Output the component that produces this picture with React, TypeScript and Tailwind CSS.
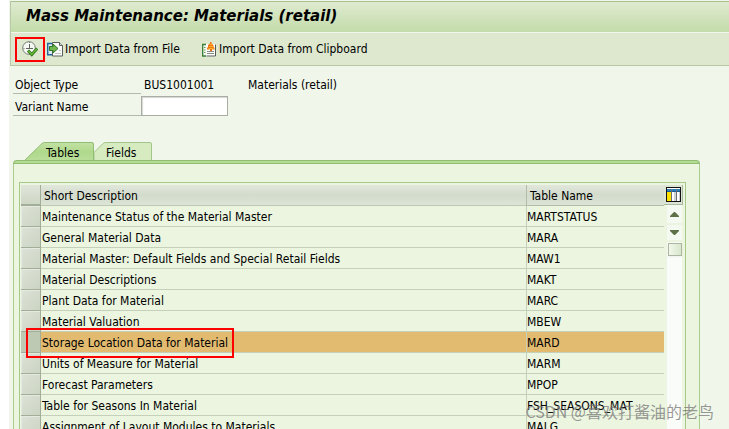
import { useState } from "react";

const rows = [
  { description: "Maintenance Status of the Material Master", table: "MARTSTATUS" },
  { description: "General Material Data", table: "MARA" },
  { description: "Material Master: Default Fields and Special Retail Fields", table: "MAW1" },
  { description: "Material Descriptions", table: "MAKT" },
  { description: "Plant Data for Material", table: "MARC" },
  { description: "Material Valuation", table: "MBEW" },
  { description: "Storage Location Data for Material", table: "MARD" },
  { description: "Units of Measure for Material", table: "MARM" },
  { description: "Forecast Parameters", table: "MPOP" },
  { description: "Table for Seasons In Material", table: "FSH_SEASONS_MAT" },
  { description: "Assignment of Layout Modules to Materials", table: "MALG" },
];

function ExecuteIcon() {
  return (
    <svg width="16" height="16" viewBox="0 0 16 16" fill="none" aria-hidden="true">
      <circle cx="7" cy="7" r="6.300" fill="#f6f8f3" stroke="#777c75" />
      <path d="M7.500 3v5M4 7.500h7" stroke="#5f655d" />
      <path d="M7.500 1v1M1.500 7.500h1M7.500 12v1" stroke="#777c75" />
      <path d="M6 9.500l3.800 4L15.200 7.500" stroke="#2f761b" strokeWidth="3" />
      <path d="M6.500 10l3.300 3.300L14.700 8" stroke="#6fc042" strokeWidth="1.200" />
    </svg>
  );
}

function FileImportIcon() {
  return (
    <svg width="16" height="15" viewBox="0 0 16 15" fill="none" aria-hidden="true">
      <path d="M5 1.500H.7v11.300H5" fill="#dce9f0" stroke="#25679a" strokeWidth="1.400" />
      <path d="M5.500.5h7l3 3v10.500h-10z" fill="#fbfcfa" stroke="#5a605b" />
      <path d="M12.500.5v3h3" fill="#d8dfd8" stroke="#5a605b" />
      <path d="M12 8.500h2M8 11.500h6" stroke="#c0c6c0" />
      <path d="M2.500 4.500H6V2l5 4.500L6 11V8.500H2.500z" fill="#73b84f" stroke="#2d7529" />
    </svg>
  );
}

function ClipboardImportIcon() {
  return (
    <svg width="14" height="15" viewBox="0 0 14 15" fill="none" aria-hidden="true">
      <path d="M4 2.500H.7v11.500H4" fill="#f4faf0" stroke="#387c35" strokeWidth="1.300" />
      <path d="M2 5.500h1.500M2 8h1.500M2 10.500h1.500" stroke="#6aa05a" />
      <path d="M4 2h10v12.500H4z" fill="#fff" />
      <path d="M13.500 2.500V14H4.500" stroke="#555b55" />
      <path d="M5 9.500h7M5 11.500h7" stroke="#858b85" />
      <path d="M8 0h1.500v1.500l2 1.500v2l1 1v1.500H10V9H8V7.500H5V6l1-1V3l2-1.500z" fill="#ee7411" />
      <path d="M8 2.500h2M7 4.500h4M6.500 6.500h5" stroke="#ffb52b" />
    </svg>
  );
}

function ColumnsIcon() {
  return (
    <svg width="15" height="15" viewBox="0 0 15 15" aria-hidden="true">
      <path d="M0 0h15v15H0z" fill="#111" />
      <path d="M1 1h13v13H1z" fill="#fff" />
      <path d="M1 2h13v3H1z" fill="#2c80ba" />
      <path d="M1 4h13v1H1z" fill="#1b5b8d" />
      <path d="M1 5h4v9H1z" fill="#ffe100" />
      <path d="M5 2h1v12H5zM10 2h1v12h-1z" fill="#68717a" />
      <path d="M8 5h2v9H8zM13 5h1v9h-1z" fill="#ccd2d6" />
    </svg>
  );
}

function Tabs({ active, onChange }: { active: string; onChange: (tab: string) => void }) {
  return (
    <div role="tablist" className="flex items-end pl-3">
      <button
        role="tab"
        aria-selected={active === "Tables"}
        onClick={() => onChange("Tables")}
        className="relative h-[18px] w-[69px] pt-[3px] pl-[21px] text-left"
      >
        <svg className="absolute inset-0" width="69" height="18" viewBox="0 0 69 18" aria-hidden="true">
          <defs>
            <linearGradient id="active-tab" x1="0" y1="0" x2="0" y2="1">
              <stop offset="0" stopColor="#c4e2a5" />
              <stop offset="0.5" stopColor="#b0d98c" />
              <stop offset="1" stopColor="#b8dd98" />
            </linearGradient>
          </defs>
          <path d="M0 18L17 1.500Q18 .5 20 .5H67Q68.500.5 68.500 2V18" fill="url(#active-tab)" stroke="#92bd75" />
        </svg>
        <span className="relative">Tables</span>
      </button>
      <button
        role="tab"
        aria-selected={active === "Fields"}
        onClick={() => onChange("Fields")}
        className="relative h-[18px] w-[58px] pt-[3px] pl-3 text-left"
      >
        <svg className="absolute inset-0" width="58" height="18" viewBox="0 0 58 18" aria-hidden="true">
          <path d="M0 18V10.500L9 1.500Q10 .5 12 .5H56Q57.500.5 57.500 2V18" fill="#d6ebc0" stroke="#a2c68a" />
        </svg>
        <span className="relative">Fields</span>
      </button>
    </div>
  );
}

function ScrollBar() {
  return (
    <div className="flex w-[19px] shrink-0 flex-col">
      <button
        aria-label="Configure columns"
        className="flex h-5 items-center justify-end border-r border-b border-[#a9b8a0] bg-[#dce4d6] pr-px"
      >
        <ColumnsIcon />
      </button>
      <div className="ml-[3px] flex w-[15px] flex-1 flex-col items-center bg-[#fafcf9]">
        <button aria-label="Scroll up" className="flex h-[18px] w-full items-center justify-center bg-[#f4f9f1]">
          <svg width="9" height="5" viewBox="0 0 9 5" aria-hidden="true">
            <path d="M4 0h1l4 4v1H0V4z" fill="#5d7148" />
          </svg>
        </button>
        <button
          aria-label="Scroll down"
          className="flex h-[19px] w-full items-center justify-center border-t-2 border-b-2 border-[#eaf4df] bg-[#f4f9f1]"
        >
          <svg width="9" height="5" viewBox="0 0 9 5" aria-hidden="true">
            <path d="M0 0h9v1L5 5H4L0 1z" fill="#5d7148" />
          </svg>
        </button>
        <div className="mt-px h-[13px] w-[14px] border border-[#aab6a0] bg-linear-to-r from-[#f2f8eb] to-[#d9e6cd] shadow-xs" />
      </div>
    </div>
  );
}

export default function App() {
  const [tab, setTab] = useState("Tables");
  const [selected, setSelected] = useState("MARD");
  const [variant, setVariant] = useState("");

  return (
    <div className="relative h-screen overflow-hidden bg-white pl-[9px] font-['DejaVu_Sans_Condensed','DejaVu_Sans',sans-serif] text-[12px] leading-4 text-black">
      <main className="flex h-full flex-col bg-[#f0f6ea] pt-px">
        <header className="ml-px border-l border-[#b9c9a9]">
          <h1 className="flex h-8 items-center border-t border-b border-t-[#a8c28f] border-b-[#f1f7eb] bg-linear-to-b from-[#dfebd0] to-[#c3dba9] pl-[15px] pb-0.5 font-['DejaVu_Sans',sans-serif] text-[15px] leading-5 font-bold italic">
            Mass Maintenance: Materials (retail)
          </h1>
          <div className="flex h-[33px] items-center border-b border-[#b7c7a8] bg-[#dde8cf] pl-1">
            <button
              aria-label="Execute"
              className="flex h-[25px] w-[30px] items-center justify-center border-2 border-[#ff0000]"
            >
              <ExecuteIcon />
            </button>
            <button className="ml-0.5 flex items-center gap-0.5 whitespace-nowrap">
              <FileImportIcon />
              Import Data from File
            </button>
            <button className="ml-[22px] flex items-center gap-[3px] whitespace-nowrap">
              <ClipboardImportIcon />
              Import Data from Clipboard
            </button>
          </div>
        </header>

        <form className="mt-2 ml-1" onSubmit={(e) => e.preventDefault()}>
          <div className="flex h-5">
            <span className="w-32 border-b border-[#b4bbae] pt-[3px] pl-0.5">Object Type</span>
            <output className="w-[104px] pt-[3px] pl-[3px]">BUS1001001</output>
            <span className="pt-[3px] pl-[3px]">Materials (retail)</span>
          </div>
          <div className="flex h-[22px] items-end">
            <label htmlFor="variant" className="h-5 w-32 border-b border-[#b4bbae] pt-[3px] pl-0.5">
              Variant Name
            </label>
            <input
              id="variant"
              value={variant}
              onChange={(e) => setVariant(e.target.value)}
              className="h-5 w-[87px] border border-[#a8aca5] bg-white px-1 shadow-[inset_1px_1px_1px_#d5d8d2] outline-none"
            />
          </div>
        </form>

        <section className="mt-[26px] mr-[29px] ml-1 flex min-h-0 flex-1 flex-col">
          <Tabs active={tab} onChange={setTab} />
          <div className="h-1 shrink-0 rounded-t-sm border border-[#91bd73] bg-[#b4db92]" />
          <div className="min-h-0 flex-1 border-x border-[#a9cd8d] bg-[#ebf5df] pt-[18px] pr-[13px] pl-[5px]">
            <div className="flex border border-[#a6c98a] pt-0.5 pr-0.5 pl-px">
              <table className="flex-1 table-fixed border-separate border-spacing-0 text-left">
                <colgroup>
                  <col className="w-5" />
                  <col />
                  <col className="w-[138px]" />
                </colgroup>
                <thead>
                  <tr className="h-[21px]">
                    <th
                      aria-label="Select"
                      className="border-r border-b-2 border-[#a3ae98] bg-linear-to-b from-[#e0e5da] to-[#ced6c5] p-0"
                    />
                    <th className="border-b border-[#bdc9b3] bg-linear-to-b from-[#e1e7dc] via-[#d3dbcc] to-[#dce4d5] pt-0.5 pr-0 pb-0 pl-[3px] font-normal">
                      Short Description
                    </th>
                    <th className="border-b border-l border-[#b0bca6] bg-linear-to-b from-[#e1e7dc] via-[#d3dbcc] to-[#dce4d5] pt-0.5 pr-0 pb-0 pl-[3px] font-normal">
                      Table Name
                    </th>
                  </tr>
                </thead>
                <tbody>
                  {rows.map((row) => {
                    const isSelected = row.table === selected;
                    return (
                      <tr key={row.table} className={isSelected ? "h-[21px] bg-[#e2bb71]" : "h-[21px]"}>
                        <td className="border-r border-b border-[#a3ae98] p-0">
                          <button
                            aria-label={`Select ${row.description}`}
                            onClick={() => setSelected(row.table)}
                            className={
                              isSelected
                                ? "block h-5 w-full bg-[#bdc9b3]"
                                : "block h-5 w-full border-t border-l border-[#e4eadf] bg-linear-to-br from-[#dce2d6] to-[#cbd4c3]"
                            }
                          />
                        </td>
                        <td className="relative border-b border-[#c5d0bb] pt-0.5 pr-0 pb-0 pl-px whitespace-nowrap">
                          {row.description}
                          {isSelected && (
                            <div className="pointer-events-none absolute -top-1 -left-[15px] h-[30px] w-[208px] border-2 border-[#ff0000]" />
                          )}
                        </td>
                        <td className="border-b border-l border-[#c5d0bb] pt-0.5 pr-0 pb-0 pl-0">{row.table}</td>
                      </tr>
                    );
                  })}
                </tbody>
              </table>
              <ScrollBar />
            </div>
          </div>
        </section>
      </main>
      <div className="pointer-events-none absolute right-[15px] bottom-1.5 font-['Noto_Sans_CJK_SC',sans-serif] text-[16px] leading-6 text-[#777777]/75">
        CSDN @喜欢打酱油的老鸟
      </div>
    </div>
  );
}
